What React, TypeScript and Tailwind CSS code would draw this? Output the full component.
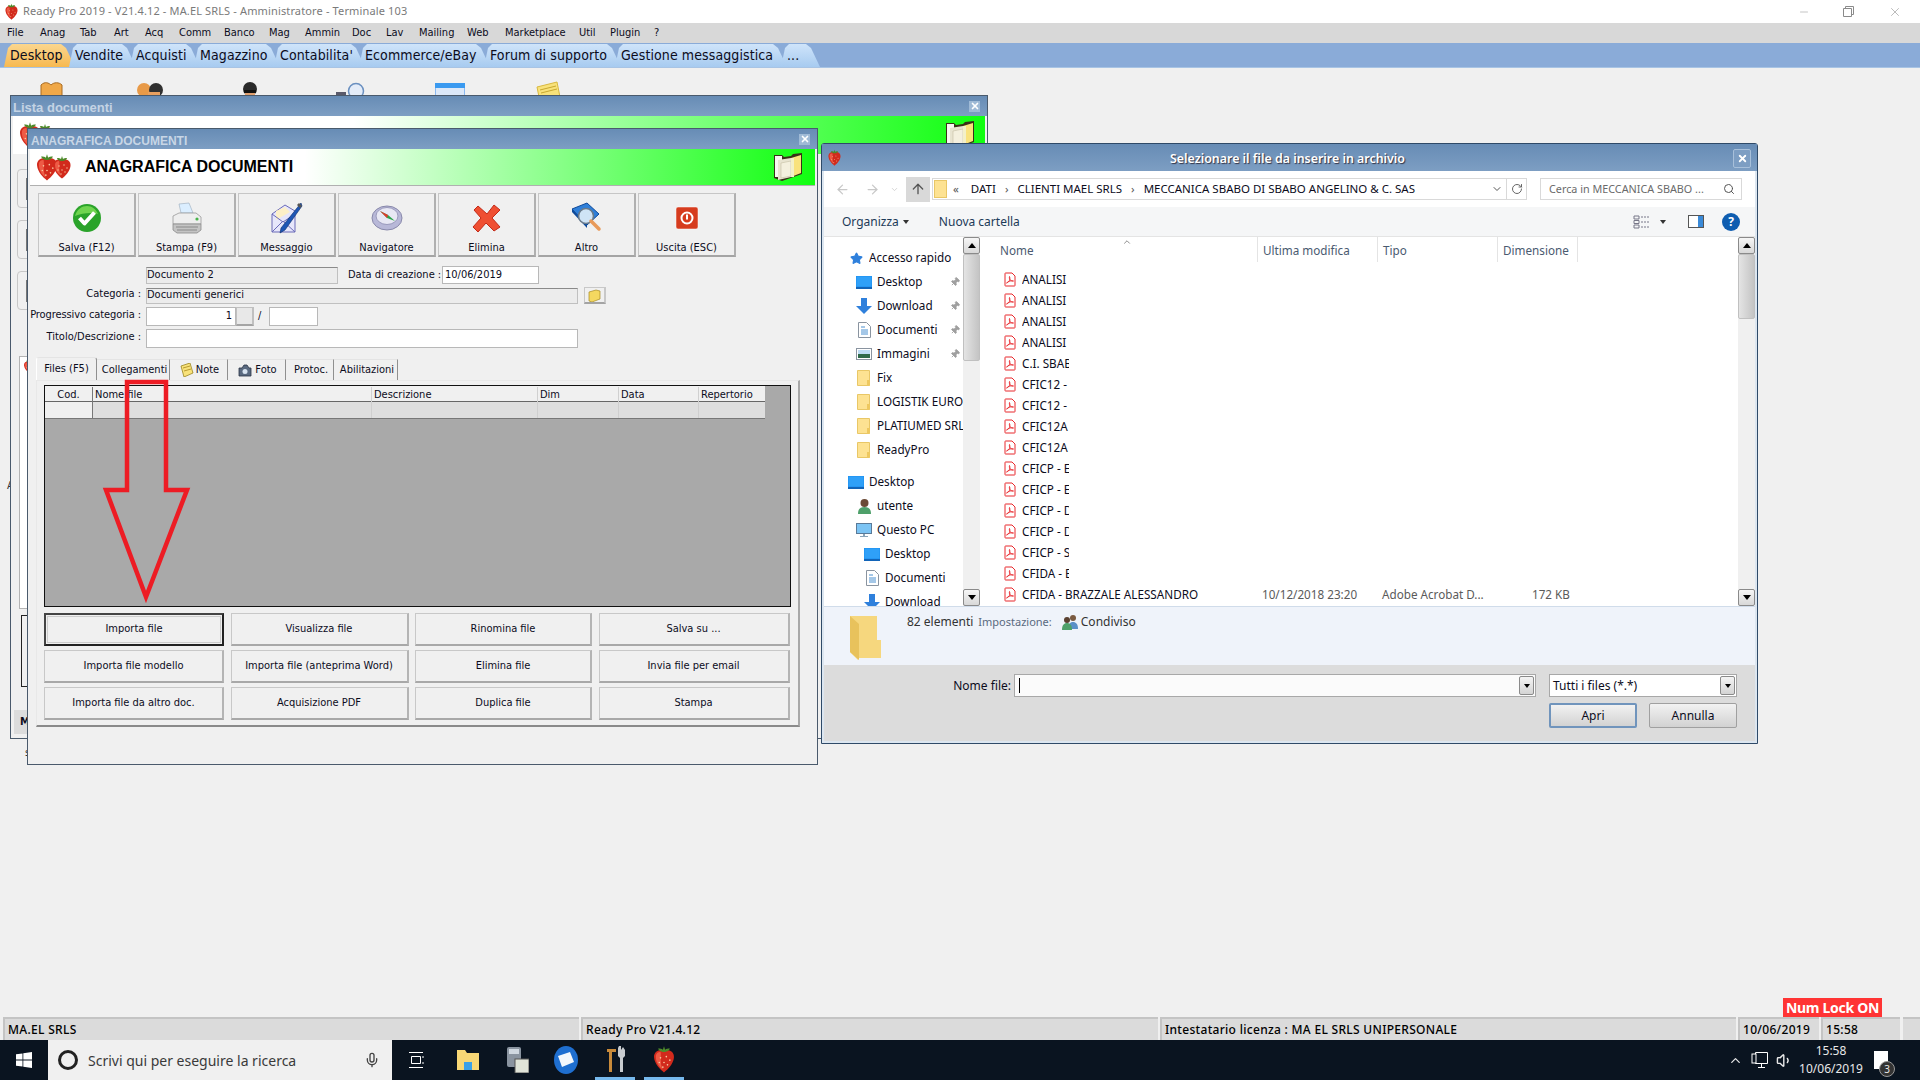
import { ArrowLeft, ArrowRight, ArrowUp, ChevronDown, ChevronUp, Mic, Minus, Pin, RotateCw, Search, Star, Volume1, X } from 'lucide-react';

const menuItems = [
  { label: 'File', cls: 'w-[33px]' },
  { label: 'Anag', cls: 'w-[40px]' },
  { label: 'Tab', cls: 'w-[34px]' },
  { label: 'Art', cls: 'w-[31px]' },
  { label: 'Acq', cls: 'w-[34px]' },
  { label: 'Comm', cls: 'w-[45px]' },
  { label: 'Banco', cls: 'w-[45px]' },
  { label: 'Mag', cls: 'w-[36px]' },
  { label: 'Ammin', cls: 'w-[47px]' },
  { label: 'Doc', cls: 'w-[34px]' },
  { label: 'Lav', cls: 'w-[33px]' },
  { label: 'Mailing', cls: 'w-[48px]' },
  { label: 'Web', cls: 'w-[38px]' },
  { label: 'Marketplace', cls: 'w-[74px]' },
  { label: 'Util', cls: 'w-[31px]' },
  { label: 'Plugin', cls: 'w-[44px]' },
  { label: '?', cls: 'w-[12px]' },
];

const mainTabs = [
  { label: 'Desktop', cls: 'w-[71px] ml-[4px] bg-gradient-to-b from-[#fbd68e] to-[#f7b94f]' },
  { label: 'Vendite', cls: 'w-[67px] -ml-[6px] bg-gradient-to-b from-[#cfe4fa] to-[#a7cbf0]' },
  { label: 'Acquisti', cls: 'w-[70px] -ml-[6px] bg-gradient-to-b from-[#cfe4fa] to-[#a7cbf0]' },
  { label: 'Magazzino', cls: 'w-[86px] -ml-[6px] bg-gradient-to-b from-[#cfe4fa] to-[#a7cbf0]' },
  { label: "Contabilita'", cls: 'w-[91px] -ml-[6px] bg-gradient-to-b from-[#cfe4fa] to-[#a7cbf0]' },
  { label: 'Ecommerce/eBay', cls: 'w-[131px] -ml-[6px] bg-gradient-to-b from-[#cfe4fa] to-[#a7cbf0]' },
  { label: 'Forum di supporto', cls: 'w-[137px] -ml-[6px] bg-gradient-to-b from-[#cfe4fa] to-[#a7cbf0]' },
  { label: 'Gestione messaggistica', cls: 'w-[172px] -ml-[6px] bg-gradient-to-b from-[#cfe4fa] to-[#a7cbf0]' },
  { label: '...', cls: 'w-[39px] -ml-[6px] bg-gradient-to-b from-[#cfe4fa] to-[#a7cbf0]' },
];

const fileNames = ['ANALISI (1)', 'ANALISI (2)', 'ANALISI (3)', 'ANALISI (4)', 'C.I. SBABO', 'CFIC12 - A', 'CFIC12 - B', 'CFIC12A 1', 'CFIC12A 2', 'CFICP - ELLE', 'CFICP - ESSE', 'CFICP - DI', 'CFICP - DUE', 'CFICP - SAN', 'CFIDA - BRA'];

function Berry({ size = 16, className = '' }: { size?: number; className?: string }) {
  return (
    <svg width={size} height={size} viewBox="0 0 24 24" className={className}>
      <path d="M12 4.500c5-1 9 1.500 8.500 6.500-.5 5-5 10-8.500 12.500C8.500 21 4 16 3.500 11 3 6 7 3.500 12 4.500z" fill="#d22a1c" />
      <path d="M9 6c1 3-1 9 2 15C7 18 5 14 5 10c0-3 2-4 4-4z" fill="#ee5a45" />
      <path d="M12 6C9 6 7 4 7 3c2 0 3 0 4 1l1-3 1 3c1-1 2-1 4-1 0 1-2 3-5 3z" fill="#4d8a2a" />
      <g fill="#f6c9a0">
        <circle cx="9" cy="11" r=".7" /><circle cx="14" cy="10" r=".7" /><circle cx="17" cy="13" r=".7" />
        <circle cx="12" cy="15" r=".7" /><circle cx="8" cy="15" r=".7" /><circle cx="15" cy="17" r=".7" /><circle cx="11" cy="19" r=".7" />
      </g>
    </svg>
  );
}

function Berries() {
  return (
    <div className="flex h-[24px] w-[40px] items-center">
      <Berry size={28} className="shrink-0" />
      <Berry size={24} className="-ml-[11px] shrink-0" />
    </div>
  );
}

function DocsFolder({ size = 30 }: { size?: number }) {
  return (
    <svg width={size} height={size} viewBox="0 0 30 30">
      <path d="M1 3h8l2 2 7-1 2-2 9-1v21L9 29l-8-3z" fill="#3a3018" />
      <path d="M2 4h7v21H2z" fill="#f8f8f2" />
      <path d="M5 8l13-2v19L5 28z" fill="#e8e4d0" />
      <path d="M8 11l10-2v15L8 26z" fill="#f4f0de" stroke="#bdb79a" strokeWidth=".5" />
      <path d="M18 6l10-3v18l-10 4z" fill="#f9e27c" />
      <path d="M18 6h3v19h-3z" fill="#f3f0c8" />
    </svg>
  );
}

function CheckIcon() {
  return (
    <svg width="30" height="30" viewBox="0 0 30 30">
      <circle cx="15" cy="15" r="14" fill="#2aa32a" />
      <path d="M3 13C5 6 10 3 15 3s9 3 11 8c-6-2-16-1-23 2z" fill="#6fd44f" />
      <path d="M7.500 15l5 5.500 10-11" fill="none" stroke="#fff" strokeWidth="4" strokeLinejoin="round" />
    </svg>
  );
}

function PrinterIcon() {
  return (
    <svg width="32" height="32" viewBox="0 0 32 32">
      <path d="M8 2l10-1 4 10H10z" fill="#dbeeff" stroke="#9ab" strokeWidth=".6" />
      <path d="M2 14l6-3h17l5 4v7H2z" fill="#eee" stroke="#999" strokeWidth=".8" />
      <path d="M2 22h28v6l-4 3H6l-4-3z" fill="#c4c4c4" stroke="#8a8a8a" strokeWidth=".8" />
      <path d="M5 25h22M6 28h20" stroke="#8a8a8a" />
      <circle cx="26" cy="17" r="1.600" fill="#47b34a" />
    </svg>
  );
}

function MailPenIcon() {
  return (
    <svg width="32" height="32" viewBox="0 0 32 32">
      <path d="M1 12L14 3l10 6v21H1z" fill="#e6e6fb" stroke="#6a6ab8" />
      <path d="M5 9l9-4 5 5-14 8z" fill="#fdf0c8" />
      <path d="M1 30l11-11 12 11M1 12l11 8 12-8" fill="none" stroke="#6a6ab8" />
      <path d="M30 1l1 3-17 24-5 3 1-5z" fill="#1d55b5" stroke="#0c2c66" strokeWidth=".6" />
      <path d="M28 1l3 3-2 2-3-3z" fill="#555" />
    </svg>
  );
}

function CompassIcon() {
  return (
    <svg width="32" height="32" viewBox="0 0 32 32">
      <ellipse cx="16" cy="16" rx="15" ry="12" fill="#b8b8d8" stroke="#8888aa" />
      <ellipse cx="16" cy="14" rx="11" ry="8.500" fill="#e8e8f4" stroke="#9a9abc" />
      <path d="M9 9l8 4 7 6-8-3z" fill="#2ba34a" />
      <path d="M9 9l8 4-1 3z" fill="#e03a2a" />
    </svg>
  );
}

function RedXIcon() {
  return (
    <svg width="30" height="30" viewBox="0 0 30 30">
      <path d="M6 3l9 8 7-9 6 5-8 8 8 9-6 4-8-8-8 9-5-5 8-9-7-8z" fill="#ef4f32" stroke="#c22a18" strokeLinejoin="round" />
    </svg>
  );
}

function BookIcon() {
  return (
    <svg width="32" height="32" viewBox="0 0 32 32">
      <path d="M1 7l15-6 12 11-12 11z" fill="#2f7fd8" stroke="#0e4a9a" />
      <path d="M1 7l15 16v3L1 10z" fill="#0e4a9a" />
      <circle cx="15" cy="14" r="7.500" fill="#cfe4f6" stroke="#6a7a8a" strokeWidth="1.600" />
      <path d="M20 19l8 8" stroke="#e89a5a" strokeWidth="3.500" strokeLinecap="round" />
    </svg>
  );
}

function PowerIcon() {
  return (
    <svg width="24" height="24" viewBox="0 0 24 24">
      <rect x="1" y="1" width="22" height="22" rx="2" fill="#d63c1e" stroke="#fff" strokeWidth=".5" />
      <circle cx="12" cy="12" r="5.500" fill="none" stroke="#fff" strokeWidth="2" />
      <path d="M12 8.500v5" stroke="#fff" strokeWidth="2" />
    </svg>
  );
}

function PdfIcon() {
  return (
    <svg width="12" height="15" viewBox="0 0 12 15" className="shrink-0">
      <path d="M1.500 1h6.500l3 3v9.500a.5.500 0 0 1-.5.500h-9a.5.500 0 0 1-.5-.5V1.500a.5.500 0 0 1 .5-.5z" fill="#fff" stroke="#e8282c" />
      <path d="M2.500 11c3-1 4-4 3-6.500-.7 3 1.500 5 4 4.500-2.500-.8-5 .2-7 2z" fill="none" stroke="#e8282c" strokeWidth=".9" />
    </svg>
  );
}

function SmallFolder() {
  return (
    <svg width="14" height="16" viewBox="0 0 14 16" className="shrink-0">
      <path d="M.5.500h12v15H.5z" fill="#fde292" stroke="#e9c766" />
      <path d="M10 10h3v5.500h-3z" fill="#eec85f" />
    </svg>
  );
}

function BlueScreen() {
  return (
    <svg width="16" height="13" viewBox="0 0 16 13" className="shrink-0">
      <rect width="16" height="13" fill="#1b8ef0" />
      <rect x=".5" y=".5" width="15" height="10" fill="#2fa0f8" />
      <path d="M0 12h16" stroke="#0a3a80" />
    </svg>
  );
}

function DownArrow() {
  return (
    <svg width="16" height="16" viewBox="0 0 16 16" className="shrink-0">
      <path d="M5 0h6v8h5l-8 8-8-8h5z" fill="#2f80dc" />
    </svg>
  );
}

function DocLines() {
  return (
    <svg width="13" height="16" viewBox="0 0 13 16" className="shrink-0">
      <path d="M.5.500h8l4 4v11H.5z" fill="#fff" stroke="#8a94a0" />
      <path d="M3 5h4M3 8h7M3 10h7M3 12h7" stroke="#4a90d0" />
    </svg>
  );
}

function PicIcon() {
  return (
    <svg width="16" height="12" viewBox="0 0 16 12" className="shrink-0">
      <rect x=".5" y=".5" width="15" height="11" fill="#fff" stroke="#8a94a0" />
      <rect x="2" y="2" width="12" height="4" fill="#bcdcf4" />
      <rect x="2" y="6" width="12" height="4" fill="#2f6a4a" />
    </svg>
  );
}

function UserIcon() {
  return (
    <svg width="13" height="16" viewBox="0 0 13 16" className="shrink-0">
      <path d="M0 16c0-5 2-7 6.500-7S13 11 13 16z" fill="#4ea06a" />
      <circle cx="6.500" cy="5" r="4" fill="#6b4a35" />
    </svg>
  );
}

function PcIcon() {
  return (
    <svg width="16" height="15" viewBox="0 0 16 15" className="shrink-0">
      <rect x=".5" y=".5" width="15" height="10" fill="#7cc4f4" stroke="#5a7a98" />
      <path d="M7 11h2v2h3v1H4v-1h3z" fill="#8aa4b8" />
    </svg>
  );
}

function SharedIcon() {
  return (
    <svg width="16" height="16" viewBox="0 0 16 16" className="shrink-0">
      <circle cx="11" cy="4" r="3" fill="#7a5a40" />
      <path d="M6 15c0-5 2-7 5-7s5 2 5 7z" fill="#5a90c8" />
      <circle cx="5" cy="6" r="3" fill="#5a4030" />
      <path d="M0 16c0-5 2-7 5-7s5 2 5 7z" fill="#4ea06a" />
    </svg>
  );
}

function ComboArrow() {
  return (
    <div className="flex h-[19px] w-[15px] shrink-0 items-center justify-center rounded-[2px] border border-[#8a8a8a] bg-gradient-to-b from-[#f4f4f4] to-[#d4d4d4]">
      <span className="border-x-[3px] border-t-[4px] border-x-transparent border-t-black" />
    </div>
  );
}

function ScrollBtn({ up }: { up?: boolean }) {
  return (
    <div className="flex h-[17px] w-full shrink-0 items-center justify-center rounded-[2px] border border-[#8a8a8a] bg-gradient-to-b from-[#f6f6f6] to-[#d8d8d8]">
      {up
        ? <span className="border-x-[4px] border-b-[5px] border-x-transparent border-b-black" />
        : <span className="border-x-[4px] border-t-[5px] border-x-transparent border-t-black" />}
    </div>
  );
}

function CloseBox({ className = '' }: { className?: string }) {
  return (
    <div className={`flex h-[11px] w-[11px] items-center justify-center bg-[#9fbad6] ${className}`}>
      <X size={10} strokeWidth={4} className="text-white" />
    </div>
  );
}

function RaisedBtn({ label, icon }: { label: string; icon: React.ReactNode }) {
  return (
    <div className="flex h-[64px] w-[98px] flex-col items-center border border-[#c6c6c6] border-b-2 border-r-2 border-b-[#a4a4a4] border-r-[#b0b0b0]">
      <div className="flex h-[46px] items-center justify-center pt-[4px]">{icon}</div>
      <span className="mt-[3px] leading-[14px]">{label}</span>
    </div>
  );
}

function GridBtn({ label, active }: { label: string; active?: boolean }) {
  return (
    <div className={active
      ? 'flex items-center justify-center border-2 border-t-[#444] border-l-[#444] border-r-[#222] border-b-[#222] outline outline-1 -outline-offset-4 outline-[#ccc]'
      : 'flex items-center justify-center border border-[#c8c8c8] border-b-2 border-r-2 border-b-[#a8a8a8] border-r-[#b4b4b4]'}>
      {label}
    </div>
  );
}

function NavRow({ icon, label, pl, pin }: { icon: React.ReactNode; label: string; pl: string; pin?: boolean }) {
  return (
    <div className={`flex h-[24px] items-center ${pl}`}>
      <span className="flex w-[16px] shrink-0 items-center justify-center">{icon}</span>
      <span className="ml-[5px] flex-1 overflow-hidden whitespace-nowrap">{label}</span>
      {pin && <Pin size={10} className="mr-[3px] shrink-0 rotate-45 fill-[#a0a0a0] text-[#a0a0a0]" />}
    </div>
  );
}

export default function App() {
  return (
    <div className="flex h-[1080px] w-[1920px] flex-col overflow-hidden bg-[#f0f0f0] font-['DejaVu_Sans_Condensed','Noto_Sans',sans-serif] text-[11px] text-[#0c0c1c]">
      {/* Main window chrome */}
      <div className="flex h-[23px] shrink-0 items-center bg-white pl-[3px] font-['Noto_Sans',sans-serif] text-[11px] tracking-[0.14px] text-[#7a7a7a]">
        <Berry size={17} />
        <span className="ml-[3px]">Ready Pro 2019 - V21.4.12 - MA.EL SRLS - Amministratore - Terminale 103</span>
        <div className="ml-auto flex items-center text-[#8a8a8a]">
          <Minus size={12} strokeWidth={1} className="mr-[33px]" />
          <svg width="11" height="11" viewBox="0 0 11 11" className="mr-[34px]"><path d="M.5 2.500h8v8h-8zM2.500 2.500v-2h8v8h-2" fill="none" stroke="#8a8a8a" /></svg>
          <X size={14} strokeWidth={1} className="mr-[18px]" />
        </div>
      </div>
      <div className="flex h-[20px] shrink-0 items-center bg-[#d8d8d8] pl-[7px]">
        {menuItems.map(m => <span key={m.label} className={m.cls}>{m.label}</span>)}
      </div>
      <div className="flex h-[25px] shrink-0 items-end border-b border-[#a8c4e4] bg-[#8aabd8] text-[14px] tracking-[0.1px]">
        {mainTabs.map(t => (
          <div key={t.label} className={`${t.cls} flex h-[23px] items-center whitespace-nowrap pl-[6px] [clip-path:polygon(0_100%,4px_4px,8px_0,calc(100%-14px)_0,calc(100%-9px)_4px,100%_100%)]`}>
            {t.label}
          </div>
        ))}
      </div>

      {/* Desktop */}
      <div className="relative flex-1">
        <svg width="24" height="16" viewBox="0 0 24 16" className="absolute left-[40px] top-[14px]">
          <path d="M1 3c4-4 8-2 10 0 3-3 8-3 11 0v13H1z" fill="#f0a848" stroke="#a86a20" />
        </svg>
        <svg width="28" height="16" viewBox="0 0 28 16" className="absolute left-[136px] top-[14px]">
          <circle cx="8" cy="8" r="7" fill="#e89a48" /><circle cx="20" cy="8" r="7" fill="#303030" /><rect x="12" y="10" width="12" height="6" fill="#e8a060" />
        </svg>
        <svg width="18" height="16" viewBox="0 0 18 16" className="absolute left-[241px] top-[14px]">
          <circle cx="9" cy="7" r="7" fill="#2a2a2a" /><rect x="4" y="8" width="10" height="8" fill="#e0a070" /><rect x="3" y="8" width="12" height="3" fill="#111" />
        </svg>
        <svg width="30" height="16" viewBox="0 0 30 16" className="absolute left-[336px] top-[14px]">
          <rect y="10" width="10" height="6" fill="#5a5a6a" /><circle cx="20" cy="9" r="7.500" fill="#e4ecf8" stroke="#6a90c0" strokeWidth="1.500" />
        </svg>
        <svg width="30" height="14" viewBox="0 0 30 14" className="absolute left-[435px] top-[15px]">
          <rect width="30" height="14" fill="#dce8f8" stroke="#3a8ae8" /><rect width="30" height="5" fill="#3a9af0" />
        </svg>
        <svg width="26" height="16" viewBox="0 0 26 16" className="absolute left-[535px] top-[13px]">
          <path d="M2 6l20-5 3 15H4z" fill="#f8e27a" stroke="#d8b840" /><path d="M5 9l16-4M6 12l16-4" stroke="#c8a830" />
        </svg>
        <span className="absolute left-[7px] top-[410px] text-[#333]">A</span>
        <span className="absolute left-[25px] top-[677px] text-[#333]">s</span>

        {/* Lista documenti, behind */}
        <div className="absolute left-[10px] top-[27px] flex h-[644px] w-[978px] flex-col border border-[#4a5a6c] bg-[#f0f0f0]">
          <div className="flex h-[20px] shrink-0 items-center justify-between bg-gradient-to-b from-[#678cb5] to-[#7d9ec3] pl-[2px] pr-[7px] text-[13px] font-bold text-[#c4d3e4]">
            <span className="pt-[3px] font-['Liberation_Sans',sans-serif]">Lista documenti</span>
            <CloseBox />
          </div>
          <div className="mx-[2px] flex h-[38px] shrink-0 items-center bg-[linear-gradient(90deg,#fff_35%,#10ff10_100%)] pl-[3px] pr-[10px]">
            <Berries />
            <span className="ml-[12px] font-['Liberation_Sans',sans-serif] text-[16px] font-bold text-black">Lista documenti</span>
            <span className="ml-auto"><DocsFolder /></span>
          </div>
          <div className="ml-[6px] mt-[15px] flex flex-col gap-[12px]">
            <div className="h-[39px] w-[100px] rounded-[4px] border border-[#c8c8c8] pl-[8px] pt-[8px]"><div className="h-[22px] border-l-2 border-[#777]" /></div>
            <div className="h-[39px] w-[100px] rounded-[4px] border border-[#c8c8c8] pl-[8px] pt-[8px]"><div className="h-[22px] border-l-2 border-[#777]" /></div>
            <div className="h-[39px] w-[100px] rounded-[4px] border border-[#c8c8c8] pl-[8px] pt-[8px]"><div className="h-[22px] border-l-2 border-[#777]" /></div>
          </div>
          <div className="ml-[8px] mt-[46px] h-[253px] w-[200px] border border-[#b4b4b4] bg-white pl-[2px] pt-[2px]">
            <Berry size={14} />
          </div>
          <div className="ml-[10px] mt-[6px] h-[72px] w-[200px] border border-[#222]" />
          <div className="ml-[3px] mt-[23px] flex h-[24px] w-[200px] items-center bg-[#dcdcdc] pl-[6px] font-bold">MA.EL</div>
        </div>

        {/* Anagrafica documenti */}
        <div className="absolute left-[27px] top-[60px] flex h-[637px] w-[791px] flex-col border border-[#4a5a6c] bg-[#f0f0f0]">
          <div className="flex h-[20px] shrink-0 items-center justify-between bg-gradient-to-b from-[#678cb5] to-[#7d9ec3] pl-[3px] pr-[7px] font-['Liberation_Sans',sans-serif] text-[12px] font-bold text-[#c8d6e6]">
            <span className="pt-[3px]">ANAGRAFICA DOCUMENTI</span>
            <CloseBox />
          </div>
          <div className="mx-[2px] flex h-[37px] shrink-0 items-center border-b border-[#b0b0b0] bg-[linear-gradient(90deg,#fff_35%,#10ff10_100%)] pl-[3px] pr-[12px]">
            <Berries />
            <span className="ml-[12px] font-['Liberation_Sans',sans-serif] text-[16px] font-bold text-black">ANAGRAFICA DOCUMENTI</span>
            <span className="ml-auto"><DocsFolder /></span>
          </div>

          <div className="ml-[10px] mt-[7px] flex gap-[2px]">
            <RaisedBtn label="Salva (F12)" icon={<CheckIcon />} />
            <RaisedBtn label="Stampa (F9)" icon={<PrinterIcon />} />
            <RaisedBtn label="Messaggio" icon={<MailPenIcon />} />
            <RaisedBtn label="Navigatore" icon={<CompassIcon />} />
            <RaisedBtn label="Elimina" icon={<RedXIcon />} />
            <RaisedBtn label="Altro" icon={<BookIcon />} />
            <RaisedBtn label="Uscita (ESC)" icon={<PowerIcon />} />
          </div>

          {/* Form */}
          <div className="ml-[118px] mt-[9px] flex h-[18px] items-center">
            <div className="flex h-[17px] w-[192px] items-center border border-[#c0c0c0] border-t-[#8a8a8a] bg-[#ececec]">Documento 2</div>
            <span className="ml-[10px] w-[91px] whitespace-nowrap">Data di creazione :</span>
            <div className="ml-[3px] flex h-[18px] w-[97px] items-center border border-[#b8b8b8] bg-white pl-[2px]">10/06/2019</div>
          </div>
          <div className="mt-[3px] flex h-[17px] items-center">
            <span className="w-[113px] pb-[2px] text-right">Categoria :</span>
            <div className="ml-[5px] flex h-[16px] w-[432px] items-center border border-[#c0c0c0] border-t-[#8a8a8a] bg-[#ececec]">Documenti generici</div>
            <div className="ml-[6px] flex h-[17px] w-[22px] items-center justify-center border border-[#c8c8c8] border-b-2 border-r-2 border-b-[#a4a4a4]">
              <svg width="13" height="13" viewBox="0 0 13 13">
                <path d="M1 3l7-2 4 1v8l-8 3-3-1z" fill="#f4d860" stroke="#a88a20" strokeWidth=".7" />
              </svg>
            </div>
          </div>
          <div className="mt-[3px] flex h-[19px] items-center">
            <span className="w-[113px] whitespace-nowrap pb-[2px] text-right tracking-[-0.1px]">Progressivo categoria :</span>
            <div className="ml-[5px] flex h-[19px] w-[90px] items-center justify-end border border-[#b8b8b8] bg-white pr-[3px]">1</div>
            <div className="h-[19px] w-[18px] border border-[#c0c0c0] border-b-2 border-r-2 border-b-[#a4a4a4] bg-[#e8e8e8]" />
            <span className="ml-[4px] w-[11px]">/</span>
            <div className="h-[19px] w-[49px] border border-[#b8b8b8] bg-white" />
          </div>
          <div className="mt-[3px] flex h-[19px] items-center">
            <span className="w-[113px] pb-[2px] text-right">Titolo/Descrizione :</span>
            <div className="ml-[5px] h-[19px] w-[432px] border border-[#b8b8b8] bg-white" />
          </div>

          {/* Tabs */}
          <div className="ml-[8px] mt-[9px] flex h-[23px] items-end">
            <div className="flex h-[23px] w-[61px] items-center justify-center rounded-t-[3px] border-x border-t border-x-[#909090] border-t-[#e4e4e4] border-l-white">Files (F5)</div>
            <div className="flex h-[21px] w-[73px] items-center justify-center border-r border-t border-r-[#909090] border-t-[#e4e4e4] pl-[3px]">Collegamenti</div>
            <div className="flex h-[21px] w-[58px] items-center justify-center gap-[2px] border-r border-t border-r-[#909090] border-t-[#e4e4e4] pl-[2px]">
              <svg width="14" height="14" viewBox="0 0 14 14"><path d="M1 3l9-3 3 10-9 4z" fill="#f8e27a" stroke="#9a8420" strokeWidth=".8" /><path d="M3 5l7-2M4 8l7-2" stroke="#b89a30" /></svg>
              Note
            </div>
            <div className="flex h-[21px] w-[58px] items-center justify-center gap-[3px] border-r border-t border-r-[#909090] border-t-[#e4e4e4] pl-[2px]">
              <svg width="14" height="13" viewBox="0 0 14 13"><path d="M1 4h3l2-3h3l2 3h2v8H1z" fill="#5a6a80" stroke="#2a3444" strokeWidth=".8" /><circle cx="7" cy="7.500" r="2.500" fill="#d8e4f0" /></svg>
              Foto
            </div>
            <div className="flex h-[21px] w-[48px] items-center justify-center border-r border-t border-r-[#909090] border-t-[#e4e4e4] pl-[3px]">Protoc.</div>
            <div className="flex h-[21px] w-[64px] items-center justify-center border-r border-t border-r-[#909090] border-t-[#e4e4e4] pl-[3px]">Abilitazioni</div>
          </div>
          <div className="ml-[8px] flex h-[347px] w-[764px] flex-col border border-[#e8e8e8] border-b-2 border-r-2 border-b-[#8a8a8a] border-r-[#a8a8a8] pl-[7px] pt-[4px]">
            <div className="h-[222px] w-[747px] border border-[#111] bg-[#a9a9a9]">
              <div className="grid h-[16px] w-[720px] grid-cols-[48px_279px_166px_81px_80px_66px] border-b border-[#666] bg-[#f0f0f0] pt-[1px]">
                <span className="border-r border-[#777] text-center">Cod.</span>
                <span className="border-r border-[#d0d0d0] pl-[2px]">Nome file</span>
                <span className="border-r border-[#d0d0d0] pl-[2px]">Descrizione</span>
                <span className="border-r border-[#d0d0d0] pl-[2px]">Dim</span>
                <span className="border-r border-[#d0d0d0] pl-[2px]">Data</span>
                <span className="pl-[2px]">Repertorio</span>
              </div>
              <div className="grid h-[17px] w-[720px] grid-cols-[48px_279px_166px_81px_80px_66px] border-b border-[#777] bg-[#dedede]">
                <span className="border-r border-[#777] bg-[#f0f0f0]" />
                <span className="border-r border-[#cfcfcf]" />
                <span className="border-r border-[#cfcfcf]" />
                <span className="border-r border-[#cfcfcf]" />
                <span className="border-r border-[#cfcfcf]" />
                <span />
              </div>
            </div>
            <div className="mt-[6px] grid grid-cols-[180px_178px_177px_191px] grid-rows-[33px_33px_33px] gap-x-[6.500px] gap-y-[4px]">
              <GridBtn label="Importa file" active />
              <GridBtn label="Visualizza file" />
              <GridBtn label="Rinomina file" />
              <GridBtn label="Salva su ..." />
              <GridBtn label="Importa file modello" />
              <GridBtn label="Importa file (anteprima Word)" />
              <GridBtn label="Elimina file" />
              <GridBtn label="Invia file per email" />
              <GridBtn label="Importa file da altro doc." />
              <GridBtn label="Acquisizione PDF" />
              <GridBtn label="Duplica file" />
              <GridBtn label="Stampa" />
            </div>
          </div>
        </div>

        {/* Red arrow annotation */}
        <svg width="100" height="230" viewBox="0 0 100 230" className="absolute left-[95px] top-[308px]">
          <path d="M32 6h39v108h21L51 221 11 114h21z" fill="none" stroke="#ed1c24" strokeWidth="4.500" />
        </svg>

        {/* File dialog */}
        <div className="absolute left-[821px] top-[75px] flex h-[601px] w-[937px] flex-col rounded-t-[3px] border border-[#2f4a68] bg-[#dce6f0] px-[2px] pb-[2px] font-['Noto_Sans',sans-serif] text-[12px]">
          <div className="relative -mx-[2px] flex h-[27px] shrink-0 items-center justify-center bg-gradient-to-b from-[#678cb5] to-[#7d9ec3] pr-[4px] pt-[3px] text-[12.400px] font-semibold text-white [text-shadow:1px_1px_1px_#334]">
            <Berry size={17} className="absolute left-[4px] top-[5px]" />
            <span>Selezionare il file da inserire in archivio</span>
            <div className="absolute right-[6px] top-[5px] flex h-[19px] w-[18px] items-center justify-center rounded-[2px] border border-[#a8c0da] bg-[#7d9ec3]">
              <X size={11} strokeWidth={4} className="text-white" />
            </div>
          </div>
          <div className="flex h-[36px] shrink-0 items-center bg-white">
            <ArrowLeft size={15} className="ml-[11px] text-[#c8c8c8]" />
            <ArrowRight size={15} className="ml-[15px] text-[#c8c8c8]" />
            <ChevronDown size={9} className="ml-[10px] text-[#c8c8c8]" />
            <div className="ml-[7px] flex h-[25px] w-[24px] items-center justify-center bg-[#d9d9d9]">
              <ArrowUp size={16} className="text-[#555]" />
            </div>
            <div className="ml-[2px] flex h-[22px] w-[595px] items-center border border-[#d9d9d9] text-[11.500px]">
              <span className="ml-[1px] h-[18px] w-[13px] border border-[#e9c766] bg-[#fde292]" />
              <span className="ml-[6px] text-[#555]">«</span>
              <span className="ml-[12px]">DATI</span>
              <span className="mx-[9px] text-[#555]">›</span>
              <span>CLIENTI MAEL SRLS</span>
              <span className="mx-[9px] text-[#555]">›</span>
              <span>MECCANICA SBABO DI SBABO ANGELINO &amp; C. SAS</span>
              <ChevronDown size={12} className="ml-auto mr-[3px] text-[#555]" />
              <div className="flex h-full w-[20px] items-center justify-center border-l border-[#d9d9d9]">
                <RotateCw size={12} className="text-[#666]" />
              </div>
            </div>
            <div className="ml-[13px] flex h-[22px] w-[202px] items-center border border-[#d9d9d9] pl-[8px] text-[10.800px] text-[#6a6a6a]">
              <span>Cerca in MECCANICA SBABO ...</span>
              <Search size={12} className="ml-auto mr-[6px] text-[#555]" />
            </div>
          </div>
          <div className="flex h-[30px] shrink-0 items-center border-b border-[#e4e4e4] bg-[#f5f6f7] text-[#1c3a58]">
            <span className="ml-[18px]">Organizza</span>
            <span className="ml-[4px] border-x-[3px] border-t-[4px] border-x-transparent border-t-[#333]" />
            <span className="ml-[30px]">Nuova cartella</span>
            <svg width="18" height="14" viewBox="0 0 18 14" className="ml-auto"><path d="M1 1h5v3H1zM1 5.500h5v3H1zM1 10h5v3H1z" fill="none" stroke="#778" /><path d="M8 2h9M8 7h9M8 12h9" stroke="#778" strokeDasharray="2 1" /></svg>
            <span className="ml-[9px] border-x-[3px] border-t-[4px] border-x-transparent border-t-[#333]" />
            <svg width="16" height="13" viewBox="0 0 16 13" className="ml-[22px]"><rect x=".5" y=".5" width="15" height="12" fill="#fff" stroke="#555" /><rect x="10" y="1" width="5" height="11" fill="#3a8ad8" /></svg>
            <div className="ml-[18px] mr-[15px] flex h-[18px] w-[18px] items-center justify-center rounded-full bg-[#0f5db0] font-bold text-white">?</div>
          </div>

          {/* Panes */}
          <div className="flex h-[369px] shrink-0 bg-white text-[11.700px]">
            <div className="h-full w-[139px] overflow-hidden pt-[9px]">
              <NavRow pl="pl-[24px]" label="Accesso rapido" icon={<Star size={13} className="fill-[#2f80dc] text-[#2f80dc]" />} />
              <NavRow pl="pl-[32px]" label="Desktop" pin icon={<BlueScreen />} />
              <NavRow pl="pl-[32px]" label="Download" pin icon={<DownArrow />} />
              <NavRow pl="pl-[32px]" label="Documenti" pin icon={<DocLines />} />
              <NavRow pl="pl-[32px]" label="Immagini" pin icon={<PicIcon />} />
              <NavRow pl="pl-[32px]" label="Fix" icon={<SmallFolder />} />
              <NavRow pl="pl-[32px]" label="LOGISTIK EUROPE" icon={<SmallFolder />} />
              <NavRow pl="pl-[32px]" label="PLATIUMED SRL" icon={<SmallFolder />} />
              <NavRow pl="pl-[32px]" label="ReadyPro" icon={<SmallFolder />} />
              <div className="h-[8px]" />
              <NavRow pl="pl-[24px]" label="Desktop" icon={<BlueScreen />} />
              <NavRow pl="pl-[32px]" label="utente" icon={<UserIcon />} />
              <NavRow pl="pl-[32px]" label="Questo PC" icon={<PcIcon />} />
              <NavRow pl="pl-[40px]" label="Desktop" icon={<BlueScreen />} />
              <NavRow pl="pl-[40px]" label="Documenti" icon={<DocLines />} />
              <NavRow pl="pl-[40px]" label="Download" icon={<DownArrow />} />
            </div>
            <div className="flex h-full w-[17px] shrink-0 flex-col bg-[#f0f0f0]">
              <ScrollBtn up />
              <div className="h-[107px] w-full rounded-[2px] border border-[#c0c0c0] bg-gradient-to-r from-[#e4e4e4] to-[#c4c4c4]" />
              <div className="flex-1" />
              <ScrollBtn />
            </div>
            <div className="flex min-w-0 flex-1 flex-col pl-[4px]">
              <div className="relative flex h-[25px] shrink-0 text-[#4a5a70]">
                <ChevronUp size={10} className="absolute left-[138px] top-0 text-[#777]" />
                <span className="w-[274px] border-r border-[#e4e4e4] pl-[16px] pt-[5px]">Nome</span>
                <span className="w-[120px] border-r border-[#e4e4e4] pl-[5px] pt-[5px]">Ultima modifica</span>
                <span className="w-[120px] border-r border-[#e4e4e4] pl-[5px] pt-[5px]">Tipo</span>
                <span className="w-[80px] border-r border-[#e4e4e4] pl-[5px] pt-[5px]">Dimensione</span>
              </div>
              <div className="pt-[7px]">
                {fileNames.map((n, i) => (
                  <div key={i} className="flex h-[21px] items-center pl-[20px]">
                    <PdfIcon />
                    <span className="ml-[6px] w-[47px] overflow-hidden whitespace-nowrap">{n}</span>
                  </div>
                ))}
                <div className="flex h-[21px] items-center pl-[20px]">
                  <PdfIcon />
                  <span className="ml-[6px] w-[240px] whitespace-nowrap">CFIDA - BRAZZALE ALESSANDRO</span>
                  <span className="w-[120px] text-[#5a5a5a]">10/12/2018 23:20</span>
                  <span className="w-[150px] text-[#5a5a5a]">Adobe Acrobat D...</span>
                  <span className="text-[#5a5a5a]">172 KB</span>
                </div>
              </div>
            </div>
            <div className="flex h-full w-[17px] shrink-0 flex-col bg-[#f0f0f0]">
              <ScrollBtn up />
              <div className="h-[65px] w-full rounded-[2px] border border-[#c0c0c0] bg-gradient-to-r from-[#e4e4e4] to-[#c4c4c4]" />
              <div className="flex-1" />
              <ScrollBtn />
            </div>
          </div>

          {/* Details */}
          <div className="flex h-[59px] shrink-0 items-start border-t border-[#d0dcea] bg-[#eff3fa]">
            <svg width="31" height="44" viewBox="0 0 31 44" className="ml-[26px] mt-[9px] shrink-0">
              <path d="M0 0h27v24h4v18H9l-1 2-8-8z" fill="#f6d77e" />
              <path d="M0 0l9 8v36l-9-8z" fill="#e8c25c" />
            </svg>
            <span className="ml-[26px] mt-[6px] text-[#333]">82 elementi</span>
            <span className="ml-[5px] mt-[7px] text-[11px] text-[#5a6a80]">Impostazione:</span>
            <span className="ml-[10px] mt-[7px]"><SharedIcon /></span>
            <span className="ml-[3px] mt-[6px] text-[#333]">Condiviso</span>
          </div>

          {/* Bottom bar */}
          <div className="flex min-h-0 flex-1 flex-col bg-[#dcdcdc]">
            <div className="mt-[9px] flex h-[23px] shrink-0 items-center">
              <span className="w-[187px] text-right">Nome file:</span>
              <div className="ml-[3px] flex h-[23px] w-[522px] items-center border border-[#a8a8a8] bg-[#fbfbfb] pl-[4px] pr-[1px]">
                <span className="h-[15px] w-px bg-black" />
                <span className="ml-auto"><ComboArrow /></span>
              </div>
              <div className="ml-[13px] flex h-[23px] w-[188px] items-center border border-[#a8a8a8] bg-white pl-[3px] pr-[1px]">
                <span>Tutti i files (*.*)</span>
                <span className="ml-auto"><ComboArrow /></span>
              </div>
            </div>
            <div className="ml-[725px] mt-[6px] flex gap-[12px]">
              <div className="flex h-[25px] w-[88px] items-center justify-center rounded-[2px] border-2 border-[#7094bc] bg-gradient-to-b from-[#f2f2f2] to-[#d2d2d2]">Apri</div>
              <div className="flex h-[25px] w-[88px] items-center justify-center rounded-[2px] border border-[#a0a0a0] bg-gradient-to-b from-[#f2f2f2] to-[#d2d2d2]">Annulla</div>
            </div>
          </div>
        </div>

        <div className="absolute bottom-0 left-[1783px] flex h-[19px] w-[99px] items-center justify-center bg-[#ff3434] font-['Noto_Sans',sans-serif] text-[14px] font-bold tracking-[-0.3px] text-white">Num Lock ON</div>
      </div>

      {/* Status bar */}
      <div className="flex h-[23px] shrink-0 gap-[2px] bg-[#f0f0f0] pl-[3px] font-['Noto_Sans',sans-serif] text-[12px] font-medium tracking-[0.3px] text-black">
        <div className="flex w-[576px] items-center border-l-2 border-t-2 border-[#c4c4c4] bg-[#dbdbdb] pl-[3px]">MA.EL SRLS</div>
        <div className="flex w-[577px] items-center border-l-2 border-t-2 border-[#c4c4c4] bg-[#dbdbdb] pl-[3px]">Ready Pro V21.4.12</div>
        <div className="flex w-[576px] items-center border-l-2 border-t-2 border-[#c4c4c4] bg-[#dbdbdb] pl-[3px]">Intestatario licenza : MA EL SRLS UNIPERSONALE</div>
        <div className="flex w-[81px] items-center border-l-2 border-t-2 border-[#c4c4c4] bg-[#dbdbdb] pl-[3px]">10/06/2019</div>
        <div className="flex w-[79px] items-center border-l-2 border-t-2 border-[#c4c4c4] bg-[#dbdbdb] pl-[3px]">15:58</div>
        <div className="ml-[1px] w-[17px] border-t-2 border-[#c4c4c4] bg-[#dbdbdb]" />
      </div>

      {/* Taskbar */}
      <div className="flex h-[40px] shrink-0 items-center bg-[#0a1420] font-['Noto_Sans',sans-serif] text-white">
        <div className="flex h-full w-[48px] items-center justify-center">
          <svg width="16" height="16" viewBox="0 0 16 16"><path d="M0 2.300l6.500-.9v6.200H0zM7.300 1.300L16 0v7.600H7.300zM0 8.400h6.500v6.200L0 13.700zM7.300 8.400H16V16l-8.700-1.200z" fill="#fff" /></svg>
        </div>
        <div className="flex h-full w-[344px] items-center bg-[#f0f0f0] pl-[10px] text-[14px] text-[#3a3a3a]">
          <span className="h-[20px] w-[20px] rounded-full border-[3px] border-[#222]" />
          <span className="ml-[10px]">Scrivi qui per eseguire la ricerca</span>
          <Mic size={16} className="ml-auto mr-[12px] text-[#444]" />
        </div>
        <div className="ml-[16px] flex w-[16px] items-center justify-center">
          <svg width="16" height="16" viewBox="0 0 16 16"><path d="M1 .5h14M1 15.500h14M3.500 4.500h9v7h-9z" fill="none" stroke="#fff" /><path d="M14 5h2M14 11h2" stroke="#fff" /></svg>
        </div>
        <div className="ml-[24px] flex gap-[9px]">
          <div className="flex h-[40px] w-[40px] items-center justify-center">
            <svg width="22" height="22" viewBox="0 0 22 22"><path d="M0 1h8l2 3h12v17H0z" fill="#f8d775" /><path d="M7 13h8v8H7z" fill="#3aa0e8" /></svg>
          </div>
          <div className="flex h-[40px] w-[40px] items-center justify-center">
            <svg width="24" height="26" viewBox="0 0 24 26"><rect x="2" y="0" width="14" height="20" rx="2" fill="#8a94a0" /><rect x="4" y="2" width="10" height="5" fill="#d0d8e0" /><rect x="10" y="12" width="14" height="14" fill="#e0e4d8" stroke="#555" /></svg>
          </div>
          <div className="flex h-[40px] w-[40px] items-center justify-center">
            <svg width="24" height="28" viewBox="0 0 24 28"><ellipse cx="12" cy="14" rx="12" ry="14" fill="#1f6fd0" /><path d="M4 10l12-4 4 10-12 5z" fill="#f4f8fc" /></svg>
          </div>
          <div className="flex h-[40px] w-[40px] items-center justify-center border-b-[3px] border-[#76b9ed]">
            <svg width="22" height="26" viewBox="0 0 22 26"><path d="M3 3h9v3H8l0 20H5V6H3z" fill="#c88a3a" /><path d="M15 0h2v4l2-3 2 3v6l-2 2v14h-3V12l-2-2V2z" fill="#c8ccd0" /></svg>
          </div>
          <div className="flex h-[40px] w-[40px] items-center justify-center border-b-[3px] border-[#76b9ed]">
            <Berry size={28} />
          </div>
        </div>
        <div className="ml-auto flex items-center text-[#e8e8e8]">
          <ChevronUp size={15} />
          <svg width="18" height="18" viewBox="0 0 18 18" className="ml-[8px]"><path d="M4.500 1.500h12v11h-12zM10.500 13v3M7 16.500h7" fill="none" stroke="#fff" /><rect x="1" y="3" width="4" height="9" fill="#0a1420" stroke="#fff" /></svg>
          <Volume1 size={17} className="ml-[7px]" />
          <div className="ml-[5px] flex w-[66px] flex-col items-center text-[12px] leading-[18px]">
            <span>15:58</span>
            <span>10/06/2019</span>
          </div>
          <div className="relative ml-[10px] mr-[32px] h-[18px] w-[14px] bg-white">
            <div className="absolute -right-[7px] top-[10px] flex h-[16px] w-[16px] items-center justify-center rounded-full border border-[#999] bg-[#333] text-[10px]">3</div>
          </div>
        </div>
      </div>
    </div>
  );
}
